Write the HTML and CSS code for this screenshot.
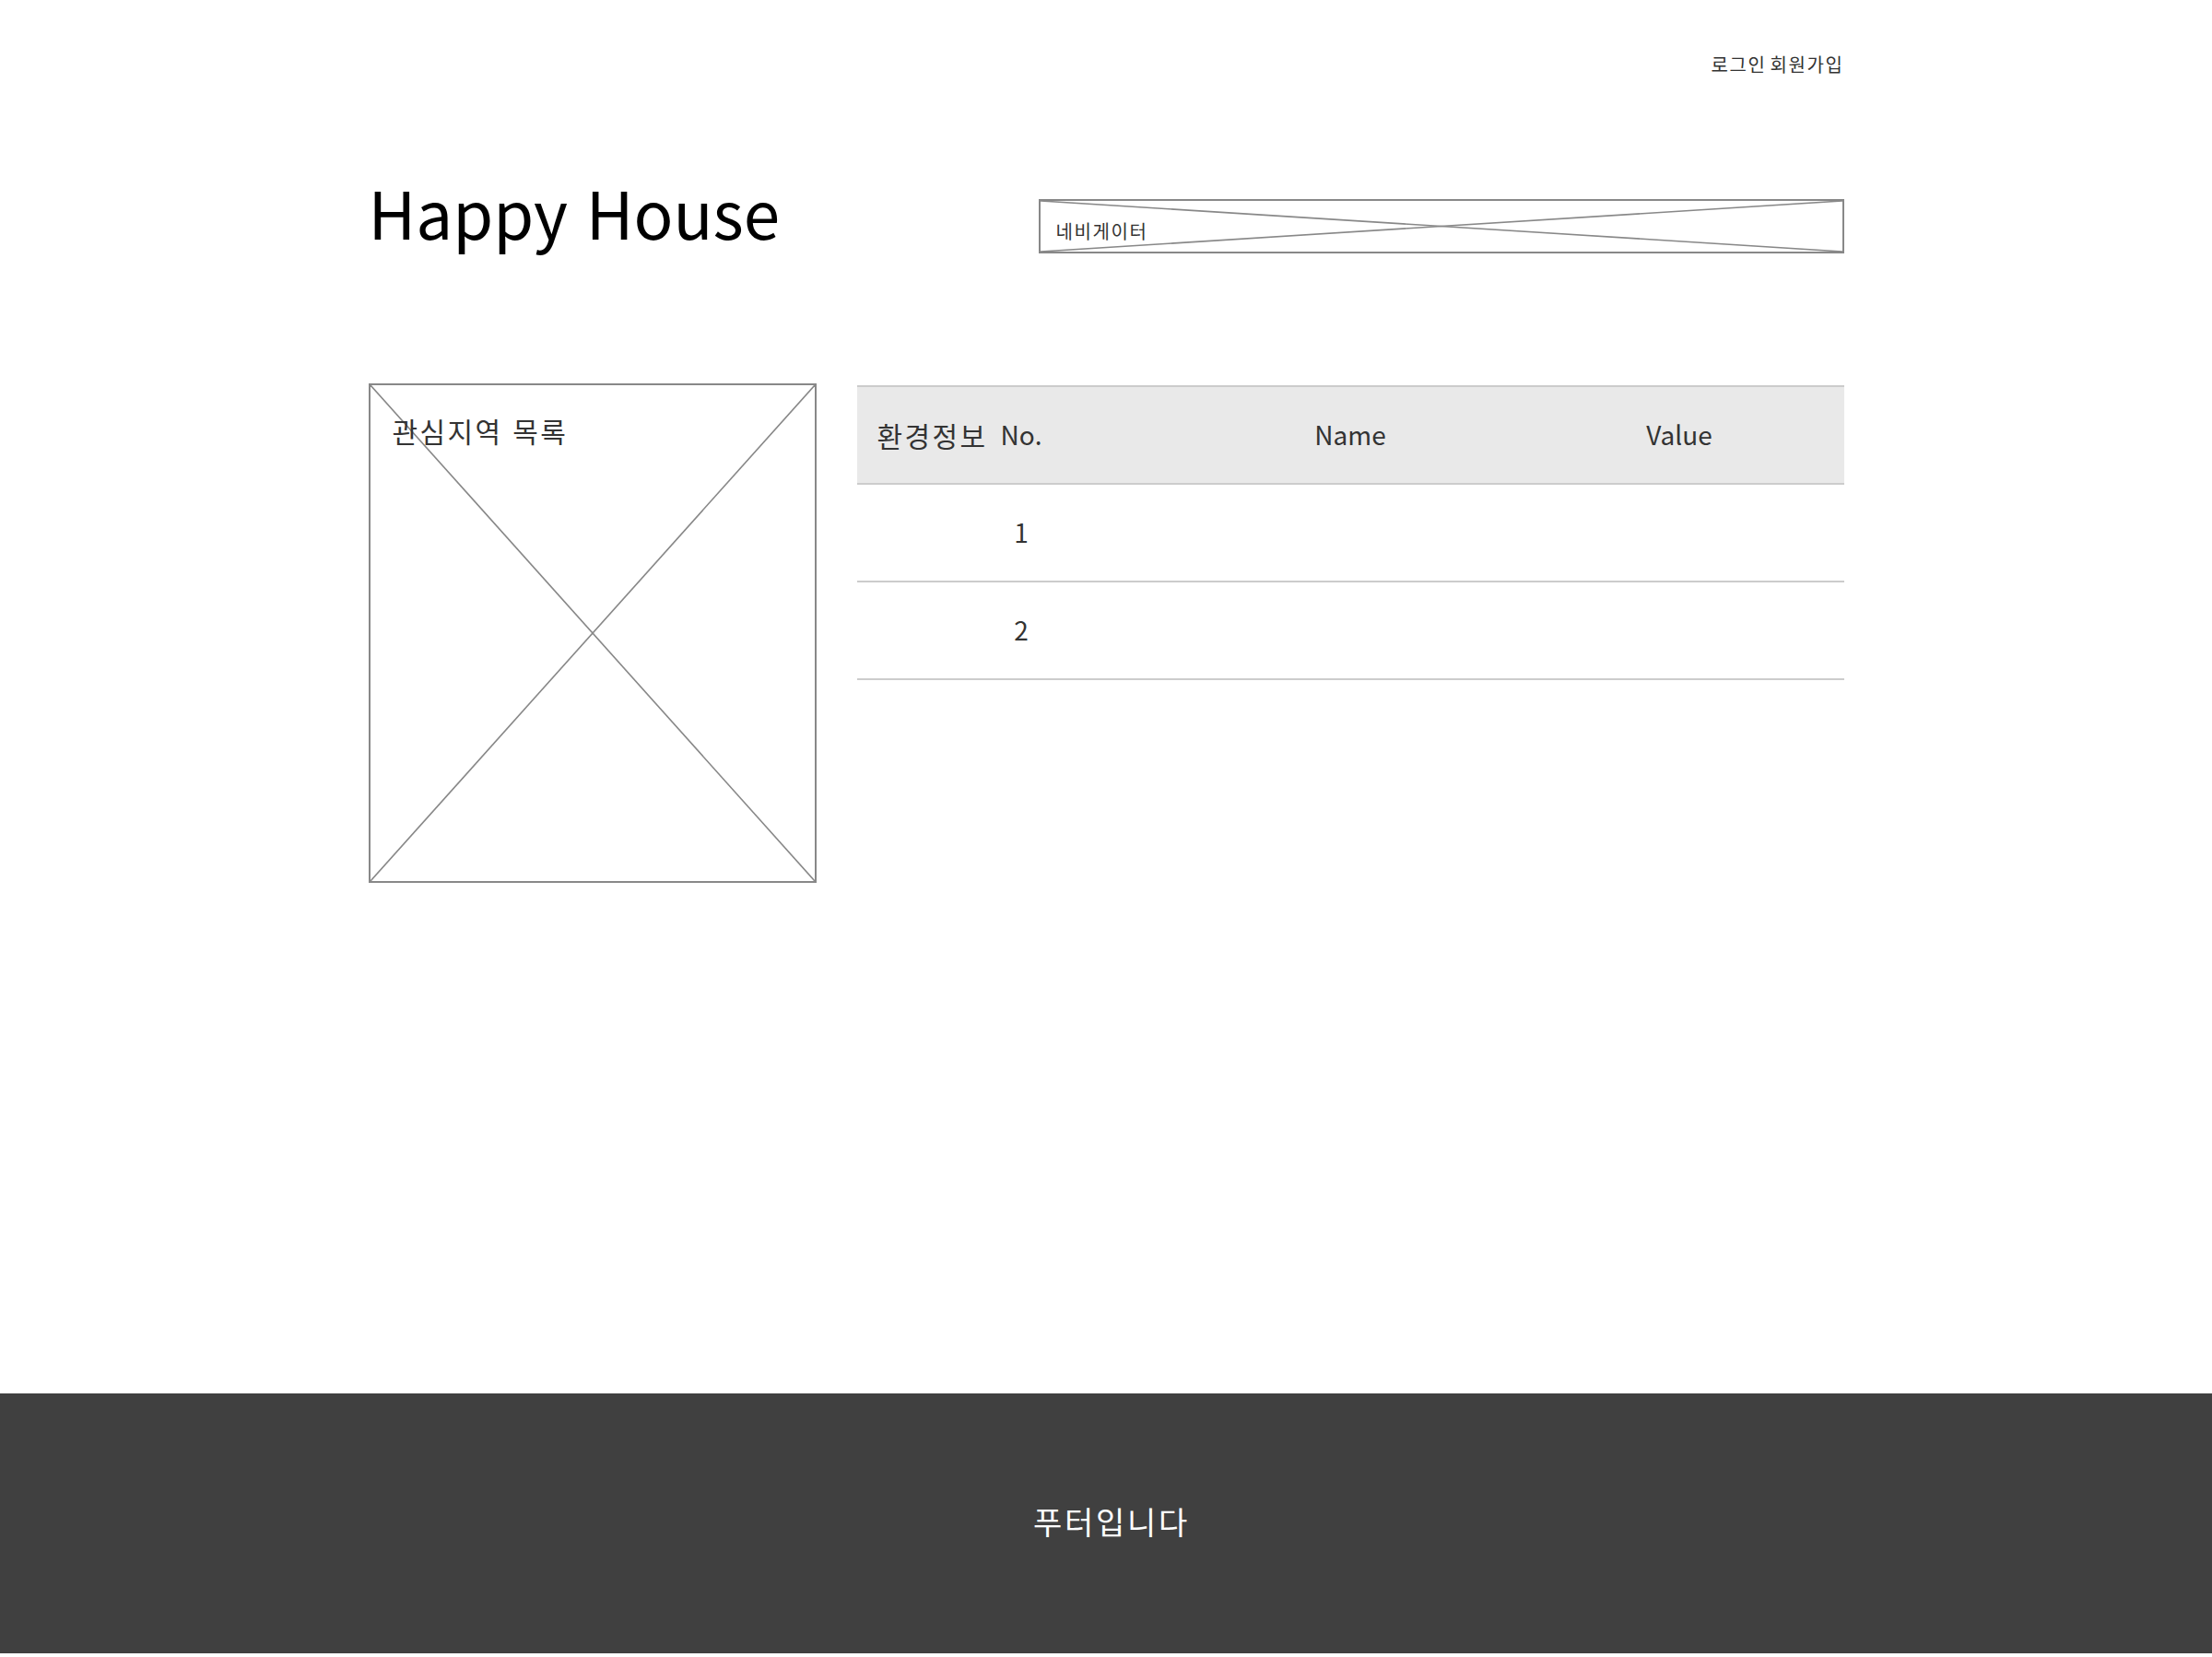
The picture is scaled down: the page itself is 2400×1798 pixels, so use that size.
FILE: index.html
```html
<!DOCTYPE html>
<html lang="ko">
<head>
<meta charset="utf-8">
<title>Happy House</title>
<link rel="stylesheet" href="styles.css">
</head>
<body>
<div class="page">
  <div class="topbar">
    <a class="toplink" href="#">로그인</a>
    <a class="toplink" href="#">회원가입</a>
  </div>
  <header class="header">
    <h1 class="title">Happy House</h1>
    <nav class="navbox">
      <svg class="xmark" viewBox="0 0 100 100" preserveAspectRatio="none">
        <line x1="0" y1="0" x2="100" y2="100" vector-effect="non-scaling-stroke"/>
        <line x1="100" y1="0" x2="0" y2="100" vector-effect="non-scaling-stroke"/>
      </svg>
      <span class="navtext">네비게이터</span>
    </nav>
  </header>
  <main class="main">
    <section class="favbox">
      <svg class="xmark" viewBox="0 0 100 100" preserveAspectRatio="none">
        <line x1="0" y1="0" x2="100" y2="100" vector-effect="non-scaling-stroke"/>
        <line x1="100" y1="0" x2="0" y2="100" vector-effect="non-scaling-stroke"/>
      </svg>
      <h2 class="favtitle">관심지역 목록</h2>
    </section>
    <section class="env">
      <span class="envtitle">환경정보</span>
      <table class="envtable">
        <thead>
          <tr><th>No.</th><th>Name</th><th>Value</th></tr>
        </thead>
        <tbody>
          <tr><td>1</td><td></td><td></td></tr>
          <tr><td>2</td><td></td><td></td></tr>
        </tbody>
      </table>
    </section>
  </main>
</div>
<footer class="footer"><span class="foottext">푸터입니다</span></footer>
</body>
</html>
```
FILE: styles.css
```css
* { box-sizing: border-box; }
html, body {
  margin: 0;
  padding: 0;
  background: #fff;
}
body {
  font-family: "Noto Sans CJK KR", "Noto Sans", sans-serif;
  color: #333;
}
.page {
  width: 1601px;
  margin: 0 auto;
}
.topbar {
  display: flex;
  justify-content: flex-end;
  gap: 4px;
  padding-top: 55px;
  height: 193px;
  font-size: 20px;
  line-height: 30px;
  letter-spacing: 0.08em;
}
.toplink {
  color: #333;
  text-decoration: none;
}
.header {
  display: flex;
  justify-content: space-between;
  align-items: flex-start;
  height: 82px;
}
.title {
  margin: 0;
  font-size: 71px;
  line-height: 72px;
  font-weight: 400;
  color: #000;
}
.navbox {
  position: relative;
  width: 874px;
  height: 59px;
  margin-top: 23px;
  border: 2px solid #888;
  padding: 19px 0 0 17px;
  font-size: 20px;
  line-height: 28px;
  letter-spacing: 0.08em;
}
.navtext { position: relative; }
.xmark {
  position: absolute;
  left: 0;
  top: 0;
  width: 100%;
  height: 100%;
}
.xmark line {
  stroke: #888;
  stroke-width: 1.6;
}
.main {
  display: flex;
  gap: 44px;
  margin-top: 141px;
}
.favbox {
  position: relative;
  flex: 0 0 486px;
  height: 542px;
  border: 2px solid #888;
  padding: 29px 0 0 24px;
}
.favtitle {
  position: relative;
  margin: 0;
  font-size: 30px;
  line-height: 40px;
  font-weight: 400;
  color: #333;
  letter-spacing: 0.08em;
}
.env {
  position: relative;
  flex: 1;
  margin-top: 2px;
}
.envtitle {
  position: absolute;
  left: 22px;
  top: 2px;
  height: 104px;
  display: flex;
  align-items: center;
  font-size: 30px;
  color: #333;
  letter-spacing: 0.08em;
}
.envtable {
  width: 100%;
  border-collapse: collapse;
  table-layout: fixed;
  font-size: 28px;
  color: #333;
}
.envtable thead tr {
  background: #e9e9e9;
  border-top: 2px solid #ccc;
}
.envtable tr {
  border-bottom: 2px solid #ccc;
}
.envtable th,
.envtable td {
  height: 106px;
  padding: 0 0 2px;
  text-align: center;
  vertical-align: middle;
  font-weight: 400;
}
.footer {
  margin-top: 554px;
  height: 282px;
  background: #404040;
  color: #fff;
  display: flex;
  align-items: center;
  justify-content: center;
  padding: 0 0 6px 12px;
  font-size: 34px;
}
.foottext {
  letter-spacing: 0.08em;
}
```
